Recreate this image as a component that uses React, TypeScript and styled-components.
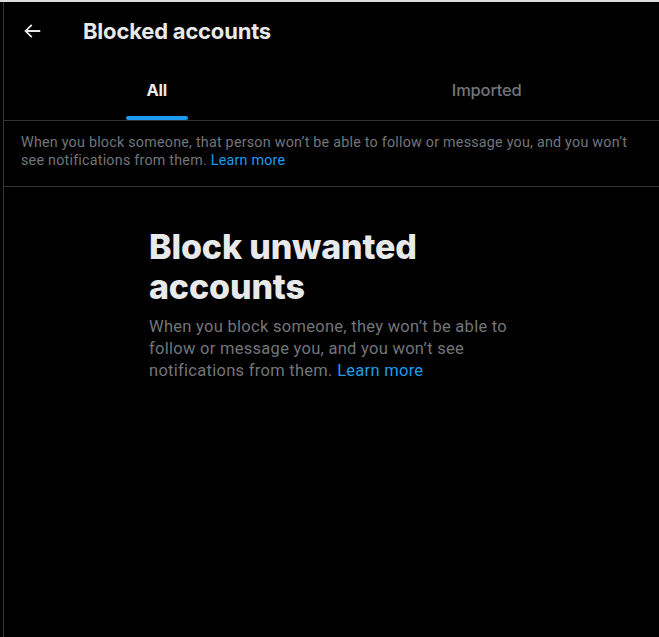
import React from "react";
import styled, { createGlobalStyle } from "styled-components";

const Global = createGlobalStyle`
  html, body {
    margin: 0;
    padding: 0;
    background: #000;
    overflow: hidden;
  }
  body {
    font-family: Roboto, "Liberation Sans", Arial, sans-serif;
    color: #e7e9ea;
  }
`;

const Page = styled.div`
  width: 659px;
  height: 637px;
  background: #000;
  border-top: 2px solid #dcdcdc;
  box-sizing: border-box;
  padding-left: 3px;
  overflow: hidden;
`;

const Column = styled.main`
  width: 660px;
  height: 100%;
  border-left: 1px solid #2f3336;
  display: flex;
  flex-direction: column;
`;

const Header = styled.header`
  height: 58px;
  display: flex;
  align-items: center;
  padding-left: 17px;
`;

const BackButton = styled.button`
  width: 22px;
  height: 22px;
  padding: 0;
  border: none;
  background: transparent;
  color: #e7e9ea;
  display: flex;
  align-items: center;
  justify-content: center;
  margin-right: 40px;
  cursor: pointer;
  svg {
    width: 22px;
    height: 22px;
    fill: currentColor;
  }
`;

const Title = styled.h2`
  margin: 0;
  font-family: Inter, Roboto, sans-serif;
  font-size: 22px;
  font-weight: 700;
  letter-spacing: -0.2px;
  color: #e7e9ea;
`;

const Tabs = styled.nav`
  display: flex;
  height: 60px;
  border-bottom: 1px solid #2f3336;
`;

const Tab = styled.div`
  flex: 1 1 auto;
  display: flex;
  justify-content: center;
  cursor: pointer;
`;

const TabLabel = styled.span<{ $active?: boolean }>`
  position: relative;
  display: flex;
  align-items: center;
  height: 100%;
  font-family: Inter, Roboto, sans-serif;
  font-size: 16.5px;
  letter-spacing: -0.2px;
  font-weight: ${(p) => (p.$active ? 700 : 500)};
  color: ${(p) => (p.$active ? "#e7e9ea" : "#71767b")};
`;

const Indicator = styled.div`
  position: absolute;
  bottom: 0;
  left: 50%;
  transform: translateX(-50%);
  width: 62px;
  height: 4px;
  border-radius: 9999px;
  background: #1d9bf0;
`;

const Info = styled.div`
  padding: 13px 17px 17px;
  border-bottom: 1px solid #2f3336;
  font-size: 14.3px;
  line-height: 17.6px;
  letter-spacing: 0.23px;
  color: #71767b;
`;

const Link = styled.a`
  color: #1d9bf0;
  text-decoration: none;
`;

const Empty = styled.section`
  width: 370px;
  margin: 40px auto 0;
`;

const EmptyTitle = styled.h1`
  margin: 0 0 9px;
  font-family: Inter, Roboto, sans-serif;
  font-size: 34px;
  line-height: 40px;
  font-weight: 800;
  color: #e7e9ea;
  letter-spacing: -0.15px;
`;

const EmptyText = styled.p`
  margin: 0;
  font-size: 16.5px;
  line-height: 22px;
  letter-spacing: 0.28px;
  color: #71767b;
`;

export default function App() {
  return (
    <>
      <Global />
      <Page>
        <Column>
          <Header>
            <BackButton aria-label="Back">
              <svg viewBox="0 0 24 24">
                <path d="M7.414 13l5.043 5.04-1.414 1.42L3.586 12l7.457-7.46 1.414 1.42L7.414 11H21v2H7.414z" />
              </svg>
            </BackButton>
            <Title>Blocked accounts</Title>
          </Header>
          <Tabs>
            <Tab>
              <TabLabel $active>
                All
                <Indicator />
              </TabLabel>
            </Tab>
            <Tab>
              <TabLabel>Imported</TabLabel>
            </Tab>
          </Tabs>
          <Info>
            When you block someone, that person won’t be able to follow or message you, and you won’t
            see notifications from them. <Link href="#">Learn more</Link>
          </Info>
          <Empty>
            <EmptyTitle>Block unwanted accounts</EmptyTitle>
            <EmptyText>
              When you block someone, they won’t be able to follow or message you, and you won’t see
              notifications from them. <Link href="#">Learn more</Link>
            </EmptyText>
          </Empty>
        </Column>
      </Page>
    </>
  );
}
